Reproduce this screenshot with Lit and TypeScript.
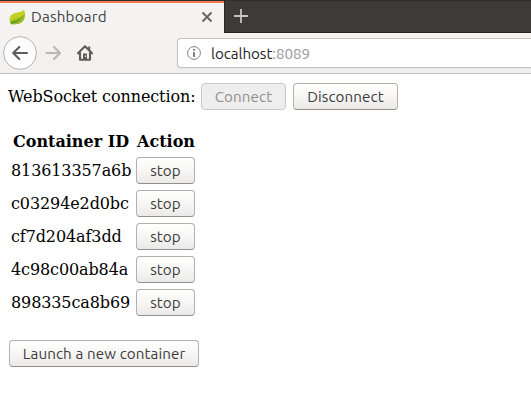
import { LitElement, html, css } from "lit";
import { customElement, property } from "lit/decorators.js";

@customElement("gtk-button")
class GtkButton extends LitElement {
  @property({ type: Boolean, reflect: true }) disabled = false;
  static styles = css`
    :host { display: block; height: 27px; }
    button {
      display: flex; align-items: center; justify-content: center;
      box-sizing: border-box; width: 100%; height: 27px; margin: 0; padding: 0;
      border: 1px solid #b3b1ae; border-bottom-color: #91908e; border-radius: 4px;
      background: linear-gradient(#ffffff, #f7f6f5 50%, #ebeae8);
      color: #3c3c3c; font: 15.2px/20px Ubuntu, "Noto Sans", sans-serif;
      letter-spacing: 0.1px; white-space: nowrap;
    }
    button:disabled { background: #eeeeee; border-color: #c8c8c8; color: #8f8f8c; }
  `;
  render() {
    return html`<button ?disabled=${this.disabled}><slot></slot></button>`;
  }
}

@customElement("browser-chrome")
class BrowserChrome extends LitElement {
  static styles = css`
    :host { display: block; font: 15.2px/20px Ubuntu, "Noto Sans", sans-serif; color: #3f4143; }
    svg { display: block; flex: none; }
    .tabs { display: flex; height: 33px; box-sizing: border-box; background: #3c3b37; border-top: 1px solid #302f2c; }
    .tab { display: flex; align-items: center; box-sizing: border-box; width: 224px; height: 32px;
      padding: 0 10px 2px 9px; border-top: 2px solid #f07c53; background: #f4f3f2; }
    .title { flex: 1; margin-left: 5px; letter-spacing: 0.2px; }
    .rest { flex: 1; box-sizing: border-box; height: 32px; padding: 8px 0 0 9px;
      border-left: 1px solid #292825; border-bottom: 1px solid #252421; }
    .bar { display: flex; align-items: center; box-sizing: border-box; height: 41px; padding-left: 3px;
      background: linear-gradient(#f4f3f2, #f1f0ef); border-bottom: 1px solid #c4c3c1; }
    .url { display: flex; align-items: center; flex: 1; box-sizing: border-box; height: 30px;
      margin-left: 83px; padding-left: 9px; background: #fff; border: 1px solid #c6c3c0;
      border-right: 0; border-radius: 4px 0 0 4px; box-shadow: 0 1px 2px #0000000d; }
    .host { margin-left: 10px; padding-top: 2px; color: #242424; letter-spacing: -0.05px; white-space: nowrap; }
    .port { color: #989898; }
    .forward { margin-left: 8px; }
    .home { margin-left: 14px; }
  `;
  render() {
    return html`
      <div class="tabs">
        <div class="tab">
          <svg width="17" height="16" viewBox="0 0 17 16">
            <path d="M15 0.5C13 3.2 9.5 3 5.5 4.2C1.5 5.5 -.3 9 .7 12.2L2 15.2C7 15.8 12.5 14.8 14.8 10.5C16.5 7.2 16 3 15 .5Z" fill="#c3d024"/>
            <path d="M15.5 4C13 9 8 8.5 3 11.2L1.5 13L2 15.2C8 15.8 13 14.5 14.9 10.5C16 8.3 16 6 15.5 4Z" fill="#9cba20"/>
            <path d="M1.5 12.7C7 12.4 11.5 10.5 14 6C12 11.5 7.5 14.2 2 15Z" fill="#5d9833"/>
          </svg>
          <span class="title">Dashboard</span>
          <svg width="14" height="14" viewBox="0 0 14 14"><path d="M2.5 2.5L11.5 11.5M11.5 2.5L2.5 11.5" stroke="#626360" stroke-width="1.8"/></svg>
        </div>
        <div class="rest">
          <svg width="14" height="14" viewBox="0 0 14 14"><path d="M7 0V14M0 7H14" stroke="#c8c5c0" stroke-width="1.8"/></svg>
        </div>
      </div>
      <div class="bar">
        <svg width="34" height="34" viewBox="0 0 34 34">
          <circle cx="17" cy="17" r="16.4" fill="#fdfdfd" stroke="#b5b3b1"/>
          <path d="M24 17H10.5M16.3 10.9L10.2 17L16.3 23.1" fill="none" stroke="#5c5c5c" stroke-width="2.1" stroke-linecap="round" stroke-linejoin="round"/>
        </svg>
        <svg class="forward" width="17" height="16" viewBox="0 0 17 16"><path d="M1.5 8H15M9 1.9L15.1 8L9 14.1" fill="none" stroke="#b9b8b7" stroke-width="2.1" stroke-linecap="round" stroke-linejoin="round"/></svg>
        <svg class="home" width="18" height="18" viewBox="0 0 18 18">
          <path d="M2 9.3L9 2.3L16 9.3M4 9V15.8H14V9" fill="none" stroke="#5c5c5c" stroke-width="2.1" stroke-linecap="round" stroke-linejoin="round"/>
          <path d="M12.2 2.5H14.2V7L12.2 5ZM7 16V9.5H11V16Z" fill="#5c5c5c"/><path d="M9 11.5H10V13H9Z" fill="#f4f3f2"/>
        </svg>
        <div class="url">
          <svg width="14" height="14" viewBox="0 0 14 14"><circle cx="7" cy="7" r="6.4" fill="none" stroke="#808080"/><path d="M7 6V11M7 3V4.8" stroke="#777" stroke-width="1.8"/></svg>
          <span class="host">localhost<span class="port">:8089</span></span>
        </div>
      </div>`;
  }
}

@customElement("app-root")
class AppRoot extends LitElement {
  static styles = css`
    :host { display: block; height: 404px; overflow: hidden; background: #fff; color: #000;
      font: 16px/19px "DejaVu Serif", serif; }
    main { padding: 9px 8px 0; }
    .status { display: flex; align-items: center; height: 27px; }
    .label { width: 193px; letter-spacing: -0.1px; white-space: nowrap; }
    .connect { width: 85px; margin-right: 7px; }
    .disconnect { width: 105px; }
    table { border-spacing: 0; table-layout: fixed; width: 188px; margin-top: 20px; }
    th, td { padding: 0; white-space: nowrap; }
    th { height: 24px; line-height: 24px; }
    th:first-child { width: 128px; padding-right: 2px; box-sizing: border-box; }
    td { height: 33px; vertical-align: middle; letter-spacing: -0.11px; }
    td:first-child { padding-left: 3px; }
    .stop { width: 59px; }
    .launch { width: 190px; margin: 21px 0 0 1px; }
  `;
  private containers = ["813613357a6b", "c03294e2d0bc", "cf7d204af3dd", "4c98c00ab84a", "898335ca8b69"];
  render() {
    return html`
      <browser-chrome></browser-chrome>
      <main>
        <div class="status">
          <span class="label">WebSocket connection:</span>
          <gtk-button class="connect" disabled>Connect</gtk-button>
          <gtk-button class="disconnect">Disconnect</gtk-button>
        </div>
        <table>
          <thead><tr><th>Container ID</th><th>Action</th></tr></thead>
          <tbody>${this.containers.map((id) => html`<tr><td>${id}</td><td><gtk-button class="stop">stop</gtk-button></td></tr>`)}</tbody>
        </table>
        <gtk-button class="launch">Launch a new container</gtk-button>
      </main>`;
  }
}
